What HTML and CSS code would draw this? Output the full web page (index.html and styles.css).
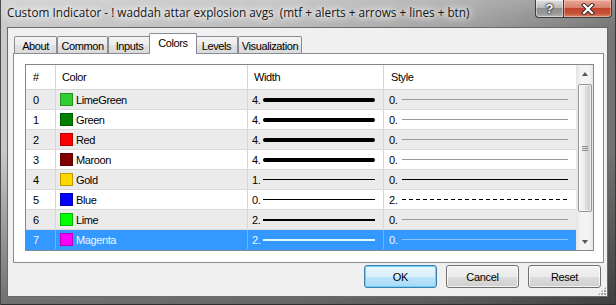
FILE: index.html
```html
<!DOCTYPE html>
<html>
<head>
<meta charset="utf-8">
<title>Custom Indicator</title>
<link rel="stylesheet" href="styles.css">
</head>
<body>
<div class="window">
  <div class="titlebar">
    <div class="title">Custom Indicator - ! waddah attar explosion avgs  (mtf + alerts + arrows + lines + btn)</div>
    <div class="caption-buttons">
      <div class="cbtn help">?</div>
      <div class="cbtn close">
        <svg width="14" height="12" viewBox="0 0 14 12">
          <path d="M3 2 L11 10 M11 2 L3 10" stroke="#3a2a2a" stroke-width="4.2" stroke-linecap="square" fill="none"/>
          <path d="M3 2 L11 10 M11 2 L3 10" stroke="#ffffff" stroke-width="2.2" stroke-linecap="square" fill="none"/>
        </svg>
      </div>
    </div>
  </div>
  <div class="client">
    <div class="tabs">
      <div class="tab t-about">About</div>
      <div class="tab t-common">Common</div>
      <div class="tab t-inputs">Inputs</div>
      <div class="tab t-colors sel">Colors</div>
      <div class="tab t-levels">Levels</div>
      <div class="tab t-vis">Visualization</div>
    </div>
    <div class="panel">
      <div class="list">
        <div class="grid">
          <div class="row head">
            <div class="c c-num">#</div>
            <div class="c c-color">Color</div>
            <div class="c c-width">Width</div>
            <div class="c c-style">Style</div>
          </div>
          <div class="row alt">
            <div class="c c-num">0</div>
            <div class="c c-color"><span class="sw sw-limegreen"></span>LimeGreen</div>
            <div class="c c-width"><span class="val">4.</span><span class="ln w4"></span></div>
            <div class="c c-style"><span class="val">0.</span><span class="ln s-na"></span></div>
          </div>
          <div class="row">
            <div class="c c-num">1</div>
            <div class="c c-color"><span class="sw sw-green"></span>Green</div>
            <div class="c c-width"><span class="val">4.</span><span class="ln w4"></span></div>
            <div class="c c-style"><span class="val">0.</span><span class="ln s-na"></span></div>
          </div>
          <div class="row alt">
            <div class="c c-num">2</div>
            <div class="c c-color"><span class="sw sw-red"></span>Red</div>
            <div class="c c-width"><span class="val">4.</span><span class="ln w4"></span></div>
            <div class="c c-style"><span class="val">0.</span><span class="ln s-na"></span></div>
          </div>
          <div class="row">
            <div class="c c-num">3</div>
            <div class="c c-color"><span class="sw sw-maroon"></span>Maroon</div>
            <div class="c c-width"><span class="val">4.</span><span class="ln w4"></span></div>
            <div class="c c-style"><span class="val">0.</span><span class="ln s-na"></span></div>
          </div>
          <div class="row alt">
            <div class="c c-num">4</div>
            <div class="c c-color"><span class="sw sw-gold"></span>Gold</div>
            <div class="c c-width"><span class="val">1.</span><span class="ln w1"></span></div>
            <div class="c c-style"><span class="val">0.</span><span class="ln s-solid"></span></div>
          </div>
          <div class="row">
            <div class="c c-num">5</div>
            <div class="c c-color"><span class="sw sw-blue"></span>Blue</div>
            <div class="c c-width"><span class="val">0.</span><span class="ln w1"></span></div>
            <div class="c c-style"><span class="val">2.</span><span class="ln s-dash"></span></div>
          </div>
          <div class="row alt">
            <div class="c c-num">6</div>
            <div class="c c-color"><span class="sw sw-lime"></span>Lime</div>
            <div class="c c-width"><span class="val">2.</span><span class="ln w2"></span></div>
            <div class="c c-style"><span class="val">0.</span><span class="ln s-na"></span></div>
          </div>
          <div class="row sel">
            <div class="c c-num">7</div>
            <div class="c c-color"><span class="sw sw-magenta"></span>Magenta</div>
            <div class="c c-width"><span class="val">2.</span><span class="ln w2"></span></div>
            <div class="c c-style"><span class="val">0.</span><span class="ln s-na"></span></div>
          </div>
        </div>
        <div class="vscroll">
          <div class="sb-arrow"><span class="tri-up"></span></div>
          <div class="thumb"><span class="grip"></span></div>
          <div class="sb-arrow down"><span class="tri-down"></span></div>
        </div>
      </div>
    </div>
    <div class="buttons">
      <div class="btn default">OK</div>
      <div class="btn">Cancel</div>
      <div class="btn">Reset</div>
    </div>
    <div class="sizegrip"></div>
  </div>
</div>
</body>
</html>
```

FILE: styles.css
```css
html, body {
  margin: 0;
  padding: 0;
}
body {
  width: 616px;
  height: 305px;
  overflow: hidden;
  font-family: "Liberation Sans", Arial, sans-serif;
  font-size: 11px;
  color: #000;
}

.window {
  box-sizing: border-box;
  width: 616px;
  height: 305px;
  display: flex;
  flex-direction: column;
  padding: 0 8px 8px 7px;
  background:
    linear-gradient(to bottom, rgba(255,255,255,0.22) 0, rgba(255,255,255,0.02) 27px, rgba(0,0,0,0) 150px, rgba(0,0,0,0.45) 305px),
    linear-gradient(to right, #c9c9c9 0%, #bababa 45%, #a0a0a0 75%, #727272 100%);
  box-shadow: inset 1px 0 0 #4a4a4a, inset -1px 0 0 #3a3a3a, inset 0 -1px 0 #2e2e2e;
}

/* title bar */
.titlebar {
  flex: none;
  height: 27px;
  display: flex;
  align-items: flex-start;
  justify-content: space-between;
}
.title {
  font-family: "Open Sans", "Noto Sans", sans-serif;
  font-size: 11.75px;
  line-height: 16px;
  color: #161616;
  padding-top: 4px;
  white-space: pre;
  text-shadow: 0 0 5px #fff, 0 0 9px #fff, 0 0 14px rgba(255,255,255,0.95);
}
.caption-buttons {
  display: flex;
  margin-right: -4px;
}
.cbtn {
  box-sizing: border-box;
  height: 18px;
  border: 1px solid #3c3c3c;
  border-top: none;
  display: flex;
  align-items: center;
  justify-content: center;
}
.help {
  width: 28px;
  border-right: none;
  border-radius: 0 0 0 4px;
  background: linear-gradient(#e2e2e2, #b9b9b9 45%, #8f8f8f 50%, #9a9a9a 80%, #b5b5b5);
  color: #fff;
  font-family: "Liberation Sans", Arial, sans-serif;
  font-weight: bold;
  font-size: 13px;
  text-shadow: 0 0 1px #222, 0 0 2px #222, 0 0 2px #222;
  box-shadow: inset 0 0 0 1px rgba(255,255,255,0.45);
}
.close {
  width: 49px;
  border-radius: 0 0 4px 0;
  background: linear-gradient(#eaa897, #d8806c 45%, #c1432c 50%, #c6533a 80%, #da8a6c);
  box-shadow: inset 0 0 0 1px rgba(255,220,210,0.45);
}

/* client area */
.client {
  position: relative;
  flex: 1;
  min-height: 0;
  display: flex;
  flex-direction: column;
  background: #f0f0f0;
  border: 1px solid #6a6a6a;
}

/* tabs */
.tabs {
  position: relative;
  z-index: 1;
  flex: none;
  height: 20px;
  margin-top: 5px;
  padding-left: 6px;
  display: flex;
  align-items: flex-end;
}
.tab {
  box-sizing: border-box;
  height: 17px;
  border: 1px solid #898c95;
  border-bottom: none;
  border-radius: 2px 2px 0 0;
  background: linear-gradient(#f3f3f3, #ececec 50%, #e2e2e2 51%, #dadada);
  display: flex;
  align-items: center;
  justify-content: center;
  letter-spacing: -0.4px;
  padding-top: 1px;
}
.t-about { width: 43px; }
.t-common { width: 51px; }
.t-inputs { width: 43px; }
.t-colors { width: 48px; }
.t-levels { width: 43px; }
.t-vis { width: 64px; }
.tab.sel {
  position: relative;
  z-index: 2;
  height: 21px;
  margin: 0 -2px -1px -2px;
  background: #fff;
  padding-top: 0;
  padding-bottom: 3px;
}

/* panel */
.panel {
  flex: none;
  box-sizing: border-box;
  height: 210px;
  margin: 0 3px 0 5px;
  border: 1px solid #898c95;
  background: #fff;
  padding: 10px 9px 11px 11px;
}
.list {
  box-sizing: border-box;
  height: 187px;
  display: flex;
  border: 1px solid #828790;
  background: #fff;
}
.grid {
  flex: 1;
  display: flex;
  flex-direction: column;
}
.row {
  box-sizing: border-box;
  height: 20px;
  display: flex;
  border-bottom: 1px solid #dadada;
  background: #fff;
  letter-spacing: -0.4px;
}
.row.alt { background: #ebebeb; }
.row.head {
  height: 25px;
  border-bottom: 1px solid #d5d5d5;
  background: #fff;
}
.row.sel {
  background: #3399ff;
  border-bottom-color: #3399ff;
  color: #eef5ff;
}
.c {
  box-sizing: border-box;
  display: flex;
  align-items: center;
  border-right: 1px solid #d6d6d6;
  white-space: nowrap;
}
.c-num { width: 30px; padding-left: 7px; }
.c-color { width: 192px; padding-left: 4px; }
.c-width { width: 136px; padding-left: 4px; }
.c-style { flex: 1; padding-left: 5px; border-right: none; }
.head .c-color { padding-left: 6px; }
.head .c-width { padding-left: 6px; }
.head .c-style { padding-left: 7px; }
.row.sel .c { border-right-color: #6fb6ff; }

.sw {
  width: 13px;
  height: 13px;
  margin-right: 3px;
  box-sizing: border-box;
  box-shadow: inset 0 0 0 1px rgba(0,0,0,0.28);
}
.sw-limegreen { background: #32cd32; }
.sw-green { background: #008000; }
.sw-red { background: #ff0000; }
.sw-maroon { background: #800000; }
.sw-gold { background: #ffd700; }
.sw-blue { background: #0000ff; }
.sw-lime { background: #00ff00; }
.sw-magenta { background: #ff00ff; }

.val { flex: none; }
.c-width .val { width: 11px; }
.c-style .val { width: 13px; }
.ln {
  flex: 1;
  margin-right: 8px;
  background: #000;
}
.w4 { height: 4px; border-radius: 2px; }
.w2 { height: 2px; }
.w1 { height: 1px; }
.s-na { height: 1px; background: #9a9a9a; }
.s-solid { height: 1px; background: #000; }
.s-dash {
  height: 1px;
  background: repeating-linear-gradient(90deg, #000 0 4px, transparent 4px 7px);
}
.row.sel .w2 { background: #e6fbff; }
.row.sel .s-na { background: #8fc3f5; }

/* scrollbar */
.vscroll {
  width: 17px;
  flex: none;
  display: flex;
  flex-direction: column;
  background: linear-gradient(to right, #e4e4e4, #f3f3f3 25%, #f5f5f5 70%, #e9e9e9);
}
.sb-arrow {
  height: 17px;
  flex: none;
  display: flex;
  align-items: center;
  justify-content: center;
}
.sb-arrow.down { margin-top: auto; }
.tri-up {
  width: 0;
  height: 0;
  border-left: 3.5px solid transparent;
  border-right: 3.5px solid transparent;
  border-bottom: 4px solid #505a66;
}
.tri-down {
  width: 0;
  height: 0;
  border-left: 3.5px solid transparent;
  border-right: 3.5px solid transparent;
  border-top: 4px solid #505a66;
}
.thumb {
  box-sizing: border-box;
  width: 14px;
  height: 128px;
  margin: 2px 0 0 2px;
  border: 1px solid #979797;
  border-radius: 2px;
  background: linear-gradient(to right, #f6f6f6, #ececec 45%, #dcdcdc 55%, #cdcdcd);
  box-shadow: inset 0 0 0 1px rgba(255,255,255,0.6);
  display: flex;
  align-items: center;
  justify-content: center;
}
.grip {
  width: 6px;
  height: 5px;
  background: repeating-linear-gradient(to bottom, #8a8a8a 0 1px, transparent 1px 2px);
}

/* buttons */
.buttons {
  flex: none;
  height: 23px;
  margin: 2px 6px 0 0;
  display: flex;
  justify-content: flex-end;
  gap: 9px;
}
.btn {
  box-sizing: border-box;
  width: 73px;
  border: 1px solid #707070;
  border-radius: 3px;
  background: linear-gradient(#f2f2f2, #ebebeb 50%, #dddddd 51%, #cfcfcf);
  box-shadow: inset 0 0 0 1px rgba(255,255,255,0.75);
  display: flex;
  align-items: center;
  justify-content: center;
  letter-spacing: -0.3px;
}
.btn.default {
  border-color: #3c7fb1;
  background: linear-gradient(#eaf6fd, #d9f0fc 50%, #bee6fd 51%, #a7d9f5);
  box-shadow: inset 0 0 0 1px #6fd0f5;
}
.sizegrip {
  position: absolute;
  right: 1px;
  bottom: 1px;
  width: 8px;
  height: 8px;
  background:
    radial-gradient(circle at 1px 1px, #a0a0a0 0.8px, transparent 1px) 0 0 / 3px 3px;
  clip-path: polygon(100% 0, 100% 100%, 0 100%);
}
```
